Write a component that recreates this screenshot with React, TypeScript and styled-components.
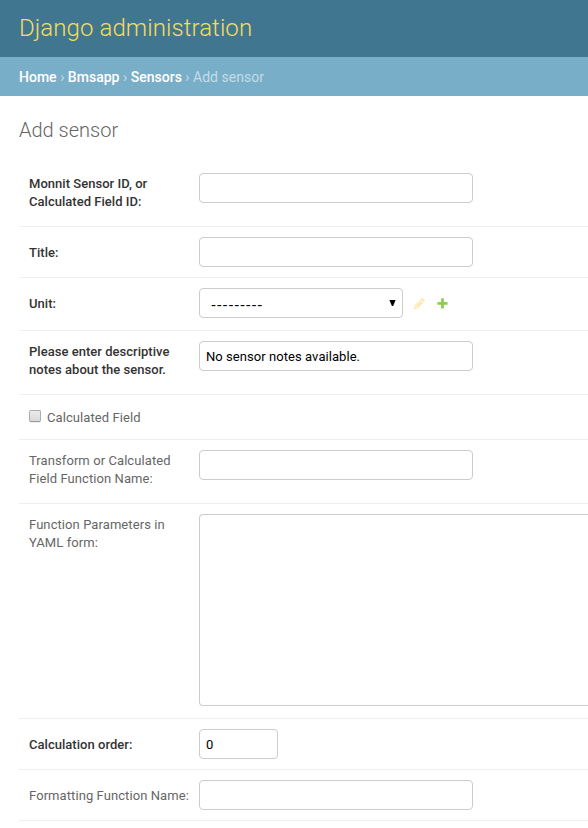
import React from 'react';
import styled, { createGlobalStyle, css } from 'styled-components';

const Global = createGlobalStyle`
  * { box-sizing: border-box; }
  html, body { margin: 0; padding: 0; background: #fff; }
  body { font-family: Roboto, "Open Sans", sans-serif; font-size: 13px; color: #333; }
`;

const Header = styled.header`
  height: 57px;
  padding: 14px 19px 0;
  background: #417690;
`;
const Branding = styled.h1`
  margin: 0;
  font-size: 24px;
  line-height: 29px;
  font-weight: 300;
  letter-spacing: 0.08px;
  color: #f5dd5d;
  white-space: nowrap;
`;
const Breadcrumbs = styled.nav`
  height: 39px;
  padding: 10px 19px;
  background: #79aec8;
  color: #c4dce8;
  font-size: 14px;
  line-height: 20px;
  letter-spacing: 0.015px;
  white-space: nowrap;
`;
const Crumb = styled.a`
  color: #fff;
  font-weight: 500;
`;
const Content = styled.main`
  padding: 20px 0 0 19px;
`;
const PageTitle = styled.h2`
  margin: 0;
  height: 47px;
  font-size: 20px;
  line-height: 28px;
  font-weight: 300;
  color: #666;
`;
const Row = styled.div<{ $h: number }>`
  display: flex;
  align-items: flex-start;
  height: ${p => p.$h}px;
  padding: 10px 0 0 10px;
  border-bottom: 1px solid #eee;
`;
const Label = styled.label<{ $required?: boolean; $top?: number }>`
  flex: 0 0 170px;
  padding-top: ${p => p.$top ?? 7}px;
  line-height: 18px;
  font-weight: ${p => (p.$required ? 500 : 400)};
  letter-spacing: ${p => (p.$required ? 0.03 : 0.08)}px;
  color: ${p => (p.$required ? '#333' : '#666')};
  white-space: pre;
`;
const control = css`
  border: 1px solid #ccc;
  border-radius: 4px;
  background: #fff;
  color: #000;
  font: 13px/18px Roboto, sans-serif;
  letter-spacing: 0.06px;
  outline: none;
`;
const TextInput = styled.input<{ $w?: number }>`
  ${control}
  width: ${p => p.$w ?? 274}px;
  height: 30px;
  padding: 5px 6px;
`;
const SelectBox = styled.div`
  ${control}
  display: flex;
  align-items: center;
  justify-content: space-between;
  width: 204px;
  height: 30px;
  padding: 0 6px 0 11px;
`;
const EmptyChoice = styled.span`
  padding-top: 4px;
  font-family: "Liberation Sans", sans-serif;
  font-size: 15px;
  letter-spacing: 0.8px;
`;
const Arrow = styled.svg`
  width: 7px;
  height: 6px;
  margin-bottom: 1px;
`;
const TextArea = styled.textarea`
  ${control}
  flex: 1;
  min-width: 0;
  height: 192px;
  border-right: 0;
  border-radius: 4px 0 0 4px;
  resize: none;
`;
const IconLink = styled.a`
  display: flex;
  margin: 9px 0 0 10px;
`;
const Check = styled.span`
  width: 12px;
  height: 12px;
  margin: 5px 6px 0 0;
  border: 1px solid #acacac;
  border-bottom-color: #999;
  border-radius: 2px;
  background: linear-gradient(#ececec, #d9d9d9);
  box-shadow: 0 1px 0 #f0f0f0;
`;

export default function App() {
  return (
    <>
      <Global />
      <Header><Branding>Django administration</Branding></Header>
      <Breadcrumbs>
        <Crumb>Home</Crumb> › <Crumb>Bmsapp</Crumb> › <Crumb>Sensors</Crumb> › Add sensor
      </Breadcrumbs>
      <Content>
        <PageTitle>Add sensor</PageTitle>
        <Row $h={64}>
          <Label $required $top={2}>{'Monnit Sensor ID, or\nCalculated Field ID:'}</Label>
          <TextInput />
        </Row>
        <Row $h={51}><Label $required>Title:</Label><TextInput /></Row>
        <Row $h={53}>
          <Label $required>Unit:</Label>
          <SelectBox>
            <EmptyChoice>---------</EmptyChoice>
            <Arrow viewBox="0 0 7 6"><path d="M0.4 0h6.2L4.1 6H2.9z" fill="#000" /></Arrow>
          </SelectBox>
          <IconLink>
            <svg width="13" height="13" viewBox="0 0 1792 1792"><path fill="#efb80b" opacity=".3" d="M491 1536l91-91-235-235-91 91v107h128v128h107zm523-928q0-22-22-22-10 0-17 7l-542 542q-7 7-7 17 0 22 22 22 10 0 17-7l542-542q7-7 7-17zm-54-192l416 416-832 832h-416v-416zm683 96q0 53-37 90l-166 166-416-416 166-165q36-38 90-38 53 0 91 38l235 234q37 39 37 91z" /></svg>
          </IconLink>
          <IconLink>
            <svg width="13" height="13" viewBox="0 0 1792 1792"><path fill="#70bf2b" opacity=".8" d="M1600 796v192q0 40-28 68t-68 28h-416v416q0 40-28 68t-68 28h-192q-40 0-68-28t-28-68v-416h-416q-40 0-68-28t-28-68v-192q0-40 28-68t68-28h416v-416q0-40 28-68t68-28h192q40 0 68 28t28 68v416h416q40 0 68 28t28 68z" /></svg>
          </IconLink>
        </Row>
        <Row $h={64}>
          <Label $required $top={2}>{'Please enter descriptive\nnotes about the sensor.'}</Label>
          <TextInput defaultValue="No sensor notes available." />
        </Row>
        <Row $h={45}><Check /><Label as="span" $top={4}>Calculated Field</Label></Row>
        <Row $h={64}>
          <Label $top={2}>{'Transform or Calculated\nField Function Name:'}</Label>
          <TextInput />
        </Row>
        <Row $h={215}>
          <Label $top={2}>{'Function Parameters in\nYAML form:'}</Label>
          <TextArea />
        </Row>
        <Row $h={51}><Label $required>Calculation order:</Label><TextInput $w={79} defaultValue="0" /></Row>
        <Row $h={51}><Label>Formatting Function Name:</Label><TextInput /></Row>
      </Content>
    </>
  );
}
